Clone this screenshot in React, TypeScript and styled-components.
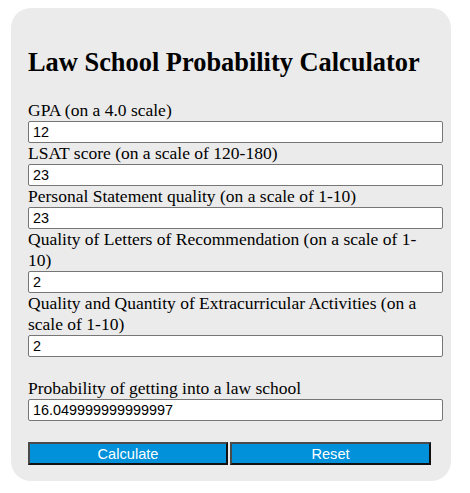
import * as React from 'react';
import styled, { createGlobalStyle } from 'styled-components';

const GlobalStyle = createGlobalStyle`
  body {
    margin: 0;
    background: #ffffff;
    font-family: "Liberation Serif", "Times New Roman", serif;
    color: #000000;
  }
`;

const Card = styled.div`
  box-sizing: border-box;
  width: 440px;
  margin: 8px 0 0 11px;
  padding: 39px 20px 16px 17px;
  background: #ebebeb;
  border-radius: 20px;
`;

const Title = styled.h2`
  margin: 0 0 23px;
  font-size: 26.4px;
  line-height: 30px;
  font-weight: bold;
`;

const Label = styled.label`
  display: block;
  font-size: 17.5px;
  line-height: 21px;
`;

const Field = styled.input.attrs({ type: 'text' })`
  display: block;
  box-sizing: border-box;
  width: 415px;
  height: 22px;
  margin: 0;
  padding: 0 4px;
  border: 1px solid #767676;
  border-radius: 2px;
  background: #ffffff;
  font-family: "Liberation Sans", Arial, sans-serif;
  font-size: 14.4px;
  color: #000000;
`;

const ResultGroup = styled.div`
  margin-top: 21px;
`;

const Buttons = styled.div`
  display: flex;
  gap: 2px;
  margin-top: 21px;
`;

const ActionButton = styled.button.attrs({ type: 'button' })<{ $width: number }>`
  box-sizing: border-box;
  width: ${(p) => p.$width}px;
  height: 23px;
  padding: 0;
  border: 2px solid;
  border-color: #4a4a4a #111111 #111111 #4a4a4a;
  background: #0091da;
  color: #ffffff;
  font-family: "Liberation Sans", Arial, sans-serif;
  font-size: 14.6px;
  cursor: pointer;
`;

interface Inputs {
  gpa: string;
  lsat: string;
  statement: string;
  letters: string;
  activities: string;
}

const initial: Inputs = {
  gpa: '12',
  lsat: '23',
  statement: '23',
  letters: '2',
  activities: '2',
};

const fields: { key: keyof Inputs; label: string }[] = [
  { key: 'gpa', label: 'GPA (on a 4.0 scale)' },
  { key: 'lsat', label: 'LSAT score (on a scale of 120-180)' },
  { key: 'statement', label: 'Personal Statement quality (on a scale of 1-10)' },
  { key: 'letters', label: 'Quality of Letters of Recommendation (on a scale of 1-10)' },
  { key: 'activities', label: 'Quality and Quantity of Extracurricular Activities (on a scale of 1-10)' },
];

function App() {
  const [values, setValues] = React.useState<Inputs>(initial);
  const [result, setResult] = React.useState('16.049999999999997');

  const calculate = () => {
    const n = (k: keyof Inputs) => parseFloat(values[k]) || 0;
    const p =
      n('gpa') * 0.25 +
      n('lsat') * 0.35 +
      n('statement') * 0.2 +
      n('letters') * 0.1 +
      n('activities') * 0.1;
    setResult(String(p));
  };

  const reset = () => {
    setValues({ gpa: '', lsat: '', statement: '', letters: '', activities: '' });
    setResult('');
  };

  return (
    <>
      <GlobalStyle />
      <Card>
        <Title>Law School Probability Calculator</Title>
        {fields.map((f) => (
          <div key={f.key}>
            <Label htmlFor={f.key}>{f.label}</Label>
            <Field
              id={f.key}
              value={values[f.key]}
              onChange={({ target }) => setValues({ ...values, [f.key]: target.value })}
            />
          </div>
        ))}
        <ResultGroup>
          <Label htmlFor="result">Probability of getting into a law school</Label>
          <Field id="result" value={result} readOnly />
        </ResultGroup>
        <Buttons>
          <ActionButton $width={200} onClick={calculate}>Calculate</ActionButton>
          <ActionButton $width={201} onClick={reset}>Reset</ActionButton>
        </Buttons>
      </Card>
    </>
  );
}

export default App;
